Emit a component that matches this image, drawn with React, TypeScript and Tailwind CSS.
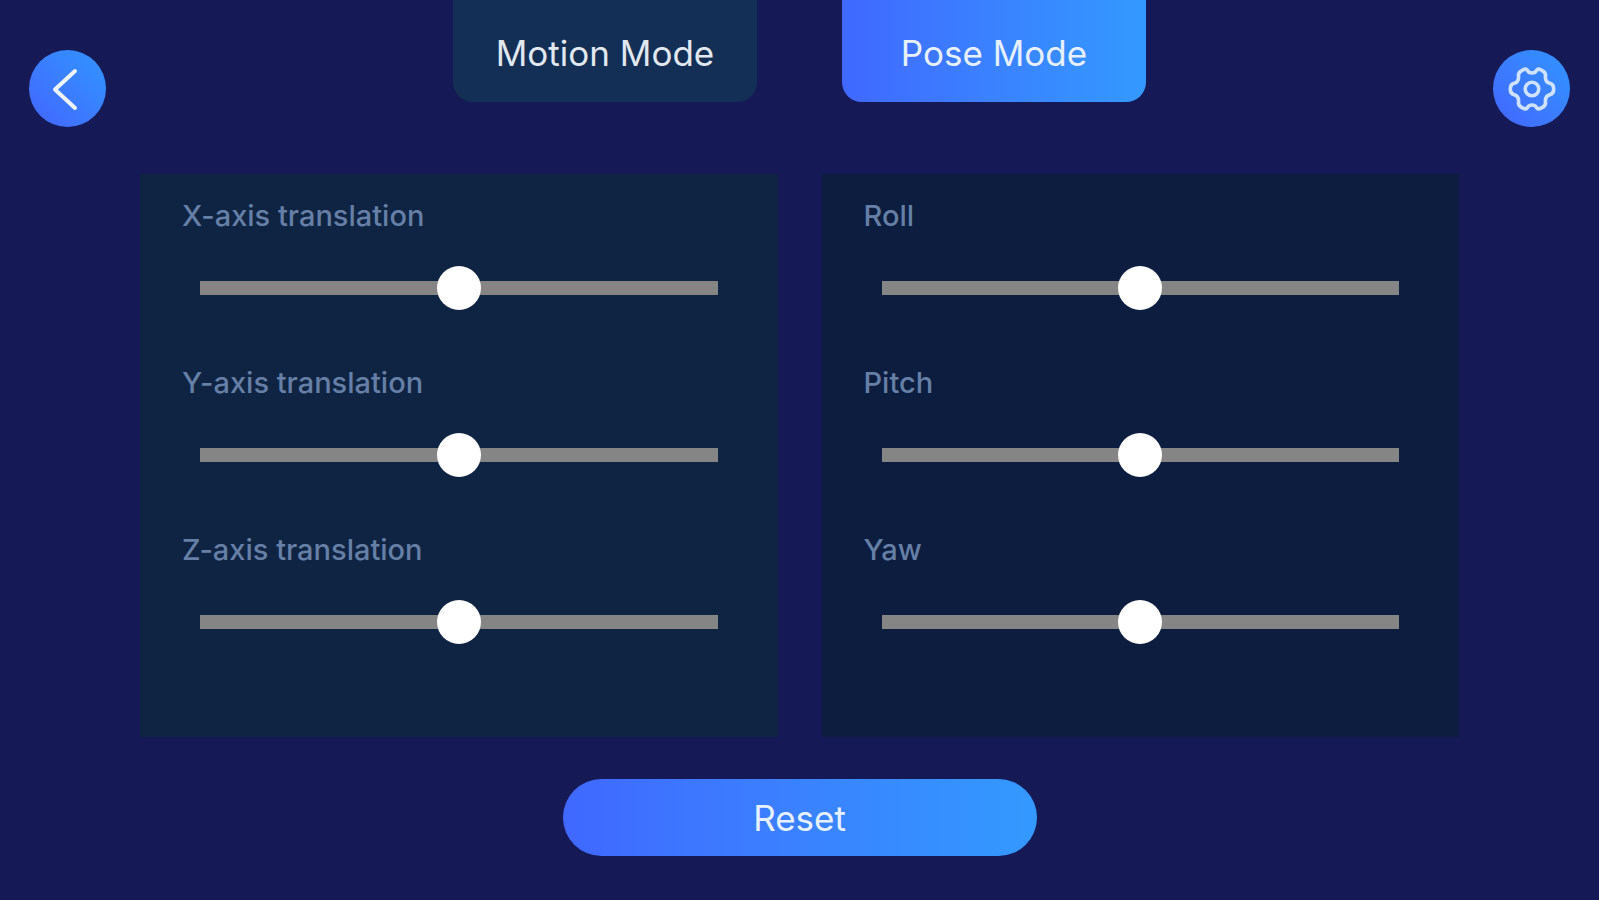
import { useState } from "react";
import type { ReactNode } from "react";

const axes = ["X-axis translation", "Y-axis translation", "Z-axis translation"];
const angles = ["Roll", "Pitch", "Yaw"];

function RoundButton({ label, children }: { label: string; children: ReactNode }) {
  return (
    <button
      type="button"
      aria-label={label}
      className="mt-[50px] flex size-[77px] items-center justify-center rounded-full bg-linear-to-tr from-[#4364ff] to-[#2f95ff]"
    >
      {children}
    </button>
  );
}

function Slider({ label }: { label: string }) {
  const [value, setValue] = useState(50);
  const id = label.toLowerCase().replace(/\s+/g, "-");
  return (
    <div className="flex flex-col gap-[30px]">
      <label htmlFor={id} className="px-[42px] text-[29px] leading-10 font-medium text-[#667fa6]">
        {label}
      </label>
      <div className="flex px-[60px]">
        <input
          id={id}
          type="range"
          min={0}
          max={100}
          value={value}
          onChange={(e) => setValue(Number(e.target.value))}
          className="h-11 w-full cursor-pointer appearance-none bg-transparent [&::-webkit-slider-runnable-track]:h-3.5 [&::-webkit-slider-runnable-track]:bg-[#858585] [&::-webkit-slider-thumb]:-mt-[15px] [&::-webkit-slider-thumb]:size-11 [&::-webkit-slider-thumb]:appearance-none [&::-webkit-slider-thumb]:rounded-full [&::-webkit-slider-thumb]:bg-white"
        />
      </div>
    </div>
  );
}

export default function App() {
  const [mode, setMode] = useState("Pose Mode");
  return (
    <div className="flex min-h-screen flex-col bg-[#151a57] pb-11 font-['Inter',sans-serif]">
      <header className="flex items-start justify-between px-[29px]">
        <RoundButton label="Back">
          <svg viewBox="0 0 48 48" className="size-12" fill="none" stroke="#eef4ff" strokeWidth="4" strokeLinecap="round" strokeLinejoin="round">
            <path d="M31 6 L11 24.500 L31 43" />
          </svg>
        </RoundButton>
        <nav className="flex gap-[85px]">
          {["Motion Mode", "Pose Mode"].map((name) => (
            <button
              key={name}
              type="button"
              onClick={() => setMode(name)}
              className={
                name === mode
                  ? "h-[102px] w-[304px] rounded-b-[20px] bg-linear-to-r from-[#4068ff] to-[#3399ff] pt-1 text-[35px] leading-10 text-[#e6f0ff]"
                  : "h-[102px] w-[304px] rounded-b-[20px] bg-[#132f55] pt-1 text-[35px] leading-10 text-[#e2e8f0]"
              }
            >
              {name}
            </button>
          ))}
        </nav>
        <RoundButton label="Settings">
          <svg viewBox="0 0 48 48" className="size-12" fill="none" stroke="#cfe2ff" strokeWidth="3.6" strokeLinejoin="round">
            <path d="M19.500 5.500 C21 8.800 27 8.800 28.500 5.500 C29.500 3.800 31 3.800 33 4.800 C37 6.800 38 8.500 37.500 11 C37 15 38.500 17.500 42.500 18.500 C46.800 20 46.800 28 42.500 29.500 C38.500 30.500 37 33 37.500 37 C38 39.500 37 41.200 33 43.200 C31 44.200 29.500 44.200 28.500 42.500 C27 39.200 21 39.200 19.500 42.500 C18.500 44.200 17 44.200 15 43.200 C11 41.200 10 39.500 10.500 37 C11 33 9.500 30.500 5.500 29.500 C1.200 28 1.200 20 5.500 18.500 C9.500 17.500 11 15 10.500 11 C10 8.500 11 6.800 15 4.800 C17 3.800 18.500 3.800 19.500 5.500 Z" />
            <circle cx="24" cy="24" r="6.800" />
          </svg>
        </RoundButton>
      </header>
      <main className="mx-[140px] mt-[47px] grid flex-1 grid-cols-2 gap-11">
        <section className="flex flex-col gap-[53px] bg-[#0f2442] pt-[22px] pb-10">
          {axes.map((name) => (
            <Slider key={name} label={name} />
          ))}
        </section>
        <section className="flex flex-col gap-[53px] bg-[#0c1d3f] pt-[22px] pb-10">
          {angles.map((name) => (
            <Slider key={name} label={name} />
          ))}
        </section>
      </main>
      <button
        type="button"
        className="mt-[42px] h-[77px] w-[474px] self-center rounded-full bg-linear-to-r from-[#4068ff] to-[#3399ff] text-[35px] leading-10 text-[#e6f0ff]"
      >
        Reset
      </button>
    </div>
  );
}
